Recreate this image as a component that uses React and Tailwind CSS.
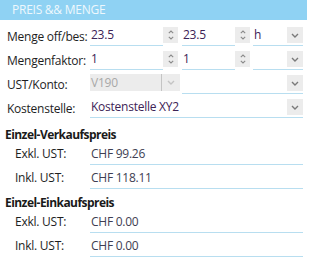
const Chevron = ({ className = 'text-[#7a7a7a]' }) => (
  <svg width="8" height="5" viewBox="0 0 8 5" className={className}>
    <path d="M1 1 L4 4 L7 1" fill="none" stroke="currentColor" strokeWidth="1.4" />
  </svg>
)

const Spinner = () => (
  <div className="flex h-[16px] w-[15px] flex-col items-center justify-center gap-[2px] bg-[#ececec]">
    <svg width="6" height="4" viewBox="0 0 6 4" className="text-[#8a8a8a]">
      <path d="M0.8 3.2 L3 1 L5.2 3.2" fill="none" stroke="currentColor" strokeWidth="1.1" />
    </svg>
    <svg width="6" height="4" viewBox="0 0 6 4" className="text-[#8a8a8a]">
      <path d="M0.8 0.8 L3 3 L5.2 0.8" fill="none" stroke="currentColor" strokeWidth="1.1" />
    </svg>
  </div>
)

const ChevronBox = () => (
  <div className="flex h-[16px] w-[16px] items-center justify-center bg-[#ececec]">
    <Chevron />
  </div>
)

const Label = ({ children }) => (
  <div className="w-[90px] shrink-0 whitespace-nowrap pl-[7px] pt-[3px] text-[#1e1e1e]">{children}</div>
)

const PriceRow = ({ label, value }) => (
  <div className="flex h-5">
    <div className="w-[90px] shrink-0 whitespace-nowrap pl-[15px] pt-[1px] text-[#1e1e1e]">{label}</div>
    <div className="w-[213px] border-b border-[#b8def0] pl-[1px] pt-[1px] text-[#3e3e52]">{value}</div>
  </div>
)

export default function App() {
  return (
    <div
      className="h-[258px] w-[309px] bg-white text-[12px] leading-[16px] tracking-[-0.25px]"
      style={{ fontFamily: '"Open Sans", "Noto Sans", sans-serif' }}
    >
      <div className="h-5 w-[307px] whitespace-nowrap bg-[#8fd2f3] pl-3 pt-[2px] text-[#eef8fd]">PREIS &amp;&amp; MENGE</div>

      <div className="mt-[6px] flex flex-col gap-1">
        {/* Menge off/bes */}
        <div className="flex h-5">
          <Label>Menge off/bes:</Label>
          <div className="w-[73px] border-b border-[#b8def0] pl-[1px] pt-[1px] text-[#3d2356]">23.5</div>
          <div className="pt-px">
            <Spinner />
          </div>
          <div className="ml-1 w-[53px] border-b border-[#b8def0] pl-[1px] pt-[1px] text-[#3d2356]">23.5</div>
          <div className="pt-px">
            <Spinner />
          </div>
          <div className="ml-[3px] flex w-[50px] items-start justify-between border-b border-[#b8def0] pt-px">
            <span className="pl-[1px] text-[#3d2356]">h</span>
            <ChevronBox />
          </div>
        </div>

        {/* Mengenfaktor */}
        <div className="flex h-5">
          <Label>Mengenfaktor:</Label>
          <div className="w-[73px] border-b border-[#b8def0] pl-[1px] pt-[1px] text-[#3d2356]">1</div>
          <div className="pt-px">
            <Spinner />
          </div>
          <div className="ml-1 w-[53px] border-b border-[#b8def0] pl-[1px] pt-[1px] text-[#3d2356]">1</div>
          <div className="pt-px">
            <Spinner />
          </div>
          <div className="ml-[3px] flex w-[50px] items-start justify-end border-b border-[#b8def0] pt-px">
            <ChevronBox />
          </div>
        </div>

        {/* UST/Konto */}
        <div className="flex h-5">
          <Label>UST/Konto:</Label>
          <div className="flex h-[17px] w-[90px] items-stretch bg-[#ececec]">
            <span className="w-[72px] border-r border-[#c4c4c4] pl-[1px] pt-[1px] text-[#a8a8a8]">V190</span>
            <div className="flex flex-1 items-center justify-center">
              <Chevron className="text-[#c4c4c4]" />
            </div>
          </div>
          <div className="ml-[2px] flex w-[121px] items-start justify-end border-b border-[#b8def0] pt-px">
            <ChevronBox />
          </div>
        </div>

        {/* Kostenstelle */}
        <div className="flex h-5">
          <Label>Kostenstelle:</Label>
          <div className="flex w-[213px] items-start justify-between border-b border-[#b8def0] pt-px">
            <span className="pl-[1px] text-[#3d2356]">Kostenstelle XY2</span>
            <ChevronBox />
          </div>
        </div>
      </div>

      <div className="mt-[9px] whitespace-nowrap pl-[5px] font-bold tracking-[-0.55px] text-[#1a1a1a]">Einzel-Verkaufspreis</div>
      <div className="mt-[2px] flex flex-col gap-1">
        <PriceRow label="Exkl. UST:" value="CHF 99.26" />
        <PriceRow label="Inkl. UST:" value="CHF 118.11" />
      </div>

      <div className="mt-[6px] whitespace-nowrap pl-[5px] font-bold tracking-[-0.55px] text-[#1a1a1a]">Einzel-Einkaufspreis</div>
      <div className="mt-[2px] flex flex-col gap-1">
        <PriceRow label="Exkl. UST:" value="CHF 0.00" />
        <PriceRow label="Inkl. UST:" value="CHF 0.00" />
      </div>
    </div>
  )
}
